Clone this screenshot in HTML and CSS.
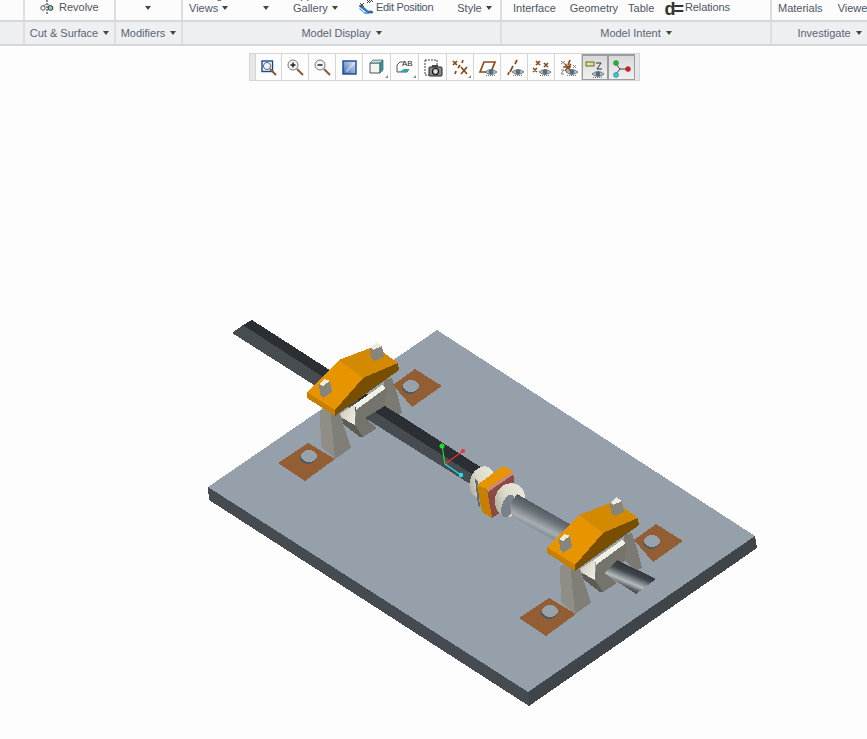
FILE: index.html
```html
<!DOCTYPE html>
<html lang="en">
<head>
  <meta charset="UTF-8">
  <title>Model</title>
  <link rel="stylesheet" href="styles.css">
</head>
<body>
  <!-- Ribbon, top row is cut off by the window -->
  <div class="ribbon-row top-row">
    <div class="group"></div>
    <div class="group revolve-group">
      <svg class="icon-revolve" width="16" height="14" viewBox="0 0 16 14">
        <path d="M7 0v14" stroke="#222" stroke-dasharray="2 1" fill="none"/>
        <circle cx="3" cy="8" r="2.2" fill="#fff" stroke="#555"/>
        <circle cx="10.5" cy="8" r="2.4" fill="#8fc6c9" stroke="#333"/>
        <path d="M3 6l4-2 4 2" stroke="#777" fill="none"/>
      </svg>
      <span class="label">Revolve</span>
    </div>
    <div class="group center-group"><i class="arrow"></i></div>
    <div class="group display-group">
      <div class="stack views"><span class="label">Manage</span><span class="label">Views<i class="arrow"></i></span></div>
      <i class="arrow lone-arrow"></i>
      <div class="stack gallery"><span class="label">Appearance</span><span class="label">Gallery<i class="arrow"></i></span></div>
      <svg class="icon-edit" width="16" height="16" viewBox="0 0 16 16">
        <path d="M1 7l9 7h5l-1-2H10L3 6z" fill="#2f74c0" stroke="#1c4f8f" stroke-width=".6"/>
        <path d="M1 10l6 5h5l-3-2H6L2 9z" fill="#5fa3dc"/>
        <path d="M2 4l4 4M6 4L2 8M9 1l3 3M12 1L9 4M12 0l3 3M15 0l-3 3" stroke="#444" fill="none"/>
      </svg>
      <span class="label edit-label">Edit Position</span>
      <span class="label style-label">Style<i class="arrow"></i></span>
    </div>
    <div class="group intent-group">
      <span class="label interface">Interface</span>
      <span class="label geometry">Geometry</span>
      <span class="label table">Table</span>
      <span class="big-d">d=</span>
      <span class="label relations">Relations</span>
    </div>
    <div class="group investigate-group">
      <span class="label materials">Materials</span>
      <span class="label viewer">Viewer</span>
    </div>
  </div>

  <div class="ribbon-row title-row">
    <div class="group"></div>
    <div class="group"><span class="title">Cut &amp; Surface<i class="arrow"></i></span></div>
    <div class="group"><span class="title">Modifiers<i class="arrow"></i></span></div>
    <div class="group"><span class="title">Model Display<i class="arrow"></i></span></div>
    <div class="group"><span class="title">Model Intent<i class="arrow"></i></span></div>
    <div class="group"><span class="title">Investigate<i class="arrow"></i></span></div>
  </div>

  <!-- Shared icon parts -->
  <svg class="defs" width="0" height="0">
    <symbol id="eye" viewBox="0 0 12 8">
      <path d="M0 4Q6-1 12 4Q6 9 0 4z" fill="#b9c2c6" stroke="#555" stroke-width=".7"/>
      <circle cx="6" cy="4" r="2.4" fill="#4d6f80"/>
      <path d="M1 7.5h10" stroke="#777" stroke-dasharray="1 1"/>
    </symbol>
    <linearGradient id="tile" x1="0" y1="1" x2="1" y2="0"><stop offset="0" stop-color="#3c6fb5"/><stop offset="1" stop-color="#dfe8f2"/></linearGradient>
  </svg>

  <!-- View toolbar -->
  <div class="toolbar">
    <div class="grip"></div>
    <button class="tool w26">
      <svg width="26" height="26" viewBox="0 0 26 26">
        <rect x="6" y="7" width="10.5" height="10.5" fill="#fff" stroke="#17439b" stroke-width="1.4"/>
        <circle cx="11" cy="12" r="3.6" fill="#eef" stroke="#666"/>
        <path d="M14 15l6 6" stroke="#8a5a2b" stroke-width="2"/>
      </svg>
    </button>
    <button class="tool">
      <svg width="26" height="26" viewBox="0 0 26 26">
        <circle cx="11" cy="11" r="5" fill="#f4f4f4" stroke="#777"/>
        <path d="M8.5 11h5M11 8.500v5" stroke="#222" stroke-width="1.5"/>
        <path d="M15 15l6 6" stroke="#8a5a2b" stroke-width="2"/>
      </svg>
    </button>
    <button class="tool">
      <svg width="26" height="26" viewBox="0 0 26 26">
        <circle cx="11" cy="11" r="5" fill="#f4f4f4" stroke="#777"/>
        <path d="M8.500 11h5" stroke="#222" stroke-width="1.5"/>
        <path d="M15 15l6 6" stroke="#8a5a2b" stroke-width="2"/>
      </svg>
    </button>
    <button class="tool">
      <svg width="26" height="26" viewBox="0 0 26 26">
        <rect x="7" y="7" width="13" height="13" fill="url(#tile)" stroke="#17439b" stroke-width="1.4"/>
        <path d="M18 9l-8 9" stroke="#fff" stroke-dasharray="1 1" stroke-width="1.500"/>
      </svg>
    </button>
    <button class="tool w28">
      <svg width="27" height="26" viewBox="0 0 27 26">
        <path d="M7 9h10v10H7z" fill="#f4f4f4" stroke="#555"/>
        <path d="M7 9l3-3h10l-3 3z" fill="#a5e3e6" stroke="#555" stroke-width=".7"/>
        <path d="M17 9l3-3v10l-3 3z" fill="#1fa3ab" stroke="#555" stroke-width=".7"/>
        <path d="M25 24h-3l3-3z" fill="#888"/>
      </svg>
    </button>
    <button class="tool w28">
      <svg width="27" height="26" viewBox="0 0 27 26">
        <path d="M6 18v-7l3-3h4M6 18h10l2-3" fill="none" stroke="#555"/>
        <path d="M13 15h5l-2 3H8z" fill="#2aa6ad"/>
        <text class="ab" x="11" y="12">AB</text>
        <path d="M25 24h-3l3-3z" fill="#888"/>
      </svg>
    </button>
    <button class="tool w28">
      <svg width="27" height="26" viewBox="0 0 27 26">
        <path d="M6 6h12v5M6 6v15h4" fill="none" stroke="#444" stroke-dasharray="2 1"/>
        <rect x="10" y="13" width="13" height="9" rx="1" fill="#8a8a8a" stroke="#222"/>
        <rect x="13" y="11" width="6" height="2" fill="#444"/>
        <circle cx="16.500" cy="17.500" r="3" fill="#ddd" stroke="#111" stroke-width="1.200"/>
      </svg>
    </button>
    <button class="tool">
      <svg width="26" height="26" viewBox="0 0 26 26">
        <path class="mark" d="M6 7l4 4M10 7l-4 4M16 6l-1 3M13 11l-2 3M9 17l-1 3M14 13l6 7M20 13l-6 7"/>
        <path d="M24 24h-3l3-3z" fill="#888"/>
      </svg>
    </button>
    <button class="tool">
      <svg width="26" height="26" viewBox="0 0 26 26">
        <path class="mark" d="M6 18l4-10h11l-4 10z"/>
        <use href="#eye" x="11" y="14" width="12" height="8"/>
      </svg>
    </button>
    <button class="tool">
      <svg width="26" height="26" viewBox="0 0 26 26">
        <path class="mark" d="M16 6l-2 4M12 12l-3 6M8 18l-1 3"/>
        <use href="#eye" x="11" y="14" width="12" height="8"/>
      </svg>
    </button>
    <button class="tool">
      <svg width="26" height="26" viewBox="0 0 26 26">
        <path class="mark" d="M8 7l4 4M12 7l-4 4M16 9l4 4M20 9l-4 4M5 14l4 4M9 14l-4 4"/>
        <use href="#eye" x="11" y="14" width="12" height="8"/>
      </svg>
    </button>
    <button class="tool">
      <svg width="26" height="26" viewBox="0 0 26 26">
        <path class="mark" d="M15 6l-2 5M8 13h8M10 10l6 7M16 10l-6 7"/>
        <path d="M6 7l4 3M10 7l-4 3M18 11l3 3M21 11l-3 3M6 16h3l-3 4h3" fill="none" stroke="#888"/>
        <use href="#eye" x="11" y="14" width="12" height="8"/>
      </svg>
    </button>
    <button class="tool active w26">
      <svg width="24" height="24" viewBox="0 0 24 24">
        <rect x="3" y="6" width="8" height="4" fill="#e6e08a" stroke="#6b6b2a"/>
        <path d="M13 7h5l-4 6h5M4 10" fill="none" stroke="#333"/>
        <use href="#eye" x="9" y="14" width="12" height="8"/>
      </svg>
    </button>
    <button class="tool active">
      <svg width="24" height="24" viewBox="0 0 24 24">
        <path d="M7 8l4 5h9M7 18l4-5" fill="none" stroke="#444"/>
        <circle cx="7" cy="7" r="2.500" fill="#0ec22f" stroke="#555" stroke-width=".5"/>
        <circle cx="19" cy="13" r="2.500" fill="#e8101c" stroke="#555" stroke-width=".5"/>
        <circle cx="7" cy="19" r="2.500" fill="#16d6e6" stroke="#555" stroke-width=".5"/>
      </svg>
    </button>
    <div class="grip-end"></div>
  </div>

  <!-- Model view, coordinates are the window's -->
  <svg class="model" width="867" height="658" viewBox="0 81 867 658">
    <defs>
      <linearGradient id="shaft-long" gradientUnits="userSpaceOnUse" x1="516" y1="492" x2="504" y2="516">
        <stop offset="0" stop-color="#4a5157"/>
        <stop offset=".4" stop-color="#6d757c"/>
        <stop offset=".75" stop-color="#a8aeb4"/>
        <stop offset="1" stop-color="#7d848b"/>
      </linearGradient>
      <linearGradient id="exit-grad" gradientUnits="userSpaceOnUse" x1="634" y1="562" x2="624" y2="586">
        <stop offset="0" stop-color="#272b30"/>
        <stop offset=".45" stop-color="#3f454a"/>
        <stop offset=".8" stop-color="#b5babd"/>
        <stop offset="1" stop-color="#50565b"/>
      </linearGradient>
      <linearGradient id="cream-grad" gradientUnits="userSpaceOnUse" x1="340" y1="412" x2="357" y2="420">
        <stop offset="0" stop-color="#cfcdbf"/>
        <stop offset="1" stop-color="#f1f0e4"/>
      </linearGradient>
      <linearGradient id="collar-grad" x1="1" y1="0" x2="0" y2="1">
        <stop offset="0" stop-color="#ecebde"/>
        <stop offset=".55" stop-color="#dddbcb"/>
        <stop offset="1" stop-color="#a09e8e"/>
      </linearGradient>

      <g id="pads">
        <polygon class="pad" points="278,463 308,443 335,459 305,481"/>
        <ellipse class="hole-under" cx="308" cy="458" rx="8" ry="6"/>
        <ellipse class="hole-top" cx="309" cy="456" rx="8" ry="6"/>
        <polygon class="pad" points="393,385 415,369 442,386 412,407"/>
        <ellipse class="hole-under" cx="410" cy="388" rx="8" ry="6"/>
        <ellipse class="hole-top" cx="411" cy="386" rx="8" ry="6"/>
      </g>

      <g id="bracket-base">
        <polygon class="leg-back" points="384,380 392,378 397,393 402,413 395,416 385,406"/>
        <polygon class="leg-side" points="320,411 321,447 335,459 336,440 332,408"/>
        <polygon class="leg-front" points="330,408 340,414 343,423 351,448 335,459"/>
        <polygon class="block-front" points="356,410 386,388 385,406 365,418 377,428 363,437 355,425"/>
        <polygon class="block-shadow" points="342,418 355,425 363,437 360,437 343,424"/>
        <polygon class="block-cream" points="340,414 355,404 355,425 342,418"/>
        <polygon class="block-strip" points="355,404 382,385 386,388 356,410"/>
      </g>

      <g id="bracket-top">
        <polygon class="orange-edge" points="307,392 335,410 335,416 307,398"/>
        <polygon class="orange-dark" points="363,378 398,363 399,370 335,416 335,410"/>
        <polygon class="orange-back" points="339,360 370,348 383,352 398,363 363,378"/>
        <polygon class="orange-top" points="307,392 339,360 363,378 335,410"/>
        <polygon class="peg-side" points="319,384 330,381 332,392 323,398 320,394"/>
        <polygon class="peg-cap" points="319,384 325,379 330,381 323,386"/>
        <polygon class="peg-side" points="370,349 382,346 384,357 374,361 371,357"/>
        <polygon class="peg-cap" points="371,348 376,342 382,346 373,350"/>
      </g>
    </defs>

    <!-- Plate -->
    <polygon class="plate-left" points="208,487 528,692 529,706 209,500"/>
    <polygon class="plate-right" points="528,692 755,536 757,548 529,706"/>
    <polygon class="plate-top" points="437,330 755,536 528,692 208,487"/>

    <use href="#pads"/>
    <use href="#pads" x="241" y="155"/>

    <!-- Rail behind the first bracket -->
    <polygon class="rail-dark" points="252,320 482,468 475,476 243,325"/>
    <polygon class="rail-light" points="243,325 475,476 470,484 232,333"/>

    <!-- Pieces of the brackets and what comes out of them -->
    <use href="#bracket-base"/>
    <polygon class="rail-dark" points="375,412 385,406 482,468 475,476"/>
    <polygon class="rail-light" points="365,418 375,412 475,476 470,484"/>

    <!-- Coupling -->
    <ellipse class="collar" cx="482" cy="482" rx="12" ry="16" transform="rotate(20 482 482)"/>
    <polygon class="coupling-side" points="475,479 478,482 480,508 478,505"/>
    <polygon class="coupling-red" points="487,489 513,471 516,502 492,518"/>
    <polygon class="coupling-pink" points="487,489 513,471 514,474 488,492"/>
    <polygon class="orange-edge" points="477,485 487,489 492,518 482,512"/>
    <polygon class="orange-top" points="477,485 503,466 513,471 487,489"/>
    <ellipse class="collar" cx="510" cy="500" rx="15" ry="17" transform="rotate(20 510 500)"/>

    <!-- Shaft runs into the second bracket -->
    <ellipse class="shaft-end" cx="508" cy="506" rx="6" ry="12" transform="rotate(20 508 506)"/>
    <polygon class="shaft" points="517,494 573,526 556,541 512,517 510,505"/>

    <use href="#bracket-base" x="240" y="155"/>
    <polygon class="shaft-exit" points="604,573 617,560 656,579 636,594"/>

    <use href="#bracket-top"/>
    <use href="#bracket-top" x="240" y="155"/>

    <!-- Datum axes -->
    <g class="axes">
      <path class="axis-green" d="M445 464l-3-19"/>
      <path class="axis-red" d="M445 464l18-13"/>
      <path class="axis-cyan" d="M445 464l16 11"/>
      <circle cx="442" cy="446" r="2.500" fill="#1fe02f"/>
      <circle cx="463" cy="451" r="2" fill="#e8343c"/>
      <circle cx="461" cy="475" r="2.200" fill="#22e4ee"/>
    </g>
  </svg>
</body>
</html>
```

FILE: styles.css
```css
/* General Styles */
body {
  margin: 0;
  height: 739px;
  overflow: hidden;
  background-color: #fdfdfd;
  font-family: "Liberation Sans", Arial, sans-serif;
  font-size: 11px;
  color: #4e5563;
}

/* Ribbon */
.ribbon-row {
  display: grid;
  grid-template-columns: 25px 91px 67px 319px 270px 117px;
  width: 889px;
  border-bottom: 2px solid #d5d7da;
  box-sizing: border-box;
}

.top-row {
  height: 22px;
  grid-template-rows: 20px;
  overflow: hidden;
  background-color: #fcfcfc;
}

.title-row {
  height: 24px;
  grid-template-rows: 22px;
  background-color: #eeeff1;
}

.group {
  display: flex;
  align-items: flex-end;
  border-right: 2px solid #dcdee1;
  box-sizing: border-box;
  min-width: 0;
  white-space: nowrap;
}

.label {
  display: block;
  line-height: 13px;
}

.top-row .group {
  padding-bottom: 6px;
}

.arrow {
  display: inline-block;
  width: 0;
  height: 0;
  margin-left: 4px;
  vertical-align: 2px;
  border-left: 3.5px solid transparent;
  border-right: 3.5px solid transparent;
  border-top: 4px solid #444;
}

.revolve-group { padding-left: 15px; }
.icon-revolve { margin-right: 3px; flex: none; }
.center-group { padding-left: 29px; }
.center-group .arrow { margin-bottom: 4px; margin-left: 0; }

.display-group { padding-left: 6px; }
.stack { display: flex; flex-direction: column; flex: none; }
.views { width: 61px; margin-bottom: -1px; }
.lone-arrow { margin-left: 13px; margin-bottom: 4px; flex: none; }
.gallery { width: 51px; margin-left: 24px; margin-bottom: -1px; }
.icon-edit { margin-left: 14px; margin-bottom: -1px; flex: none; }
.edit-label { margin-left: 2px; letter-spacing: -.3px; }
.style-label { margin-left: 24px; margin-bottom: -1px; }

.intent-group { padding-left: 11px; }
.geometry { margin-left: 14px; }
.table { margin-left: 10px; }
.big-d {
  margin-left: 10px;
  font-size: 18px;
  font-weight: bold;
  line-height: 18px;
  letter-spacing: -2px;
  color: #333;
  margin-bottom: -4px;
}
.relations { margin-left: 3px; letter-spacing: -.1px; }
.interface, .geometry, .table { margin-bottom: -1px; }

.investigate-group { padding-left: 6px; }
.viewer { margin-left: 15px; }
.materials, .viewer { margin-bottom: -1px; }

.title-row .group {
  align-items: center;
  justify-content: center;
}

.title {
  color: #5b6373;
  line-height: 13px;
}

.title .arrow {
  margin-left: 5px;
}

/* View toolbar */
.toolbar {
  display: flex;
  width: 391px;
  height: 28px;
  margin: 7px 0 0 249px;
  background-color: #fdfdfd;
  border: 1px solid #d3d5d8;
  box-sizing: border-box;
}

.defs {
  position: absolute;
}

.grip {
  width: 5px;
  background-color: #e6e7ea;
  border-right: 1px solid #d3d5d8;
}

.grip-end {
  flex: 1;
  background-color: #e6e7ea;
}

.tool {
  display: block;
  width: 27px;
  height: 26px;
  margin: 0;
  padding: 0;
  background: none;
  border: none;
  border-right: 1px solid #d3d5d8;
  box-sizing: border-box;
  flex: none;
}

.tool svg {
  display: block;
}

.tool.w26 { width: 26px; }
.tool.w28 { width: 28px; }

.tool.active {
  background: linear-gradient(#d8d8da, #f0f0f1);
  border: 1px solid #9c9c9c;
  border-top-width: 2px;
}

.mark {
  fill: none;
  stroke: #8a4a1c;
  stroke-width: 1.7;
}

.ab {
  font-size: 8px;
  fill: #222;
}

/* Model view */
.model {
  display: block;
}

.model polygon,
.model ellipse {
  shape-rendering: crispEdges;
}

.plate-top { fill: #96a0aa; }
.plate-left { fill: #454b50; }
.plate-right { fill: #3f4549; }

.pad { fill: #935e33; }
.hole-under { fill: #4f5a61; }
.hole-top { fill: #98a2ab; }

.rail-dark { fill: #2b2f33; }
.rail-light { fill: #474c51; }
.shaft { fill: url(#shaft-long); }
.shaft-end { fill: #79818a; }
.shaft-exit { fill: url(#exit-grad); }

.leg-back { fill: #7a7a72; }
.leg-side { fill: #8e8e87; }
.leg-front { fill: #7f7f77; }
.block-front { fill: #74746c; }
.block-shadow { fill: #5c5c55; }
.block-cream { fill: url(#cream-grad); }
.block-strip { fill: #f1f0e4; }

.orange-top { fill: #e69500; }
.orange-back { fill: #d38a00; }
.orange-edge { fill: #c67f00; }
.orange-dark { fill: #784e00; }

.peg-side { fill: #85857d; }
.peg-cap { fill: #ecebdd; }

.collar { fill: url(#collar-grad); }
.coupling-side { fill: #5d6c78; }
.coupling-red { fill: #8c4a44; }
.coupling-pink { fill: #c98a7c; }

.axes path {
  fill: none;
  stroke-width: 1.2;
}

.axis-green { stroke: #1fe02f; }
.axis-red { stroke: #e8343c; }
.axis-cyan { stroke: #22e4ee; }
```
